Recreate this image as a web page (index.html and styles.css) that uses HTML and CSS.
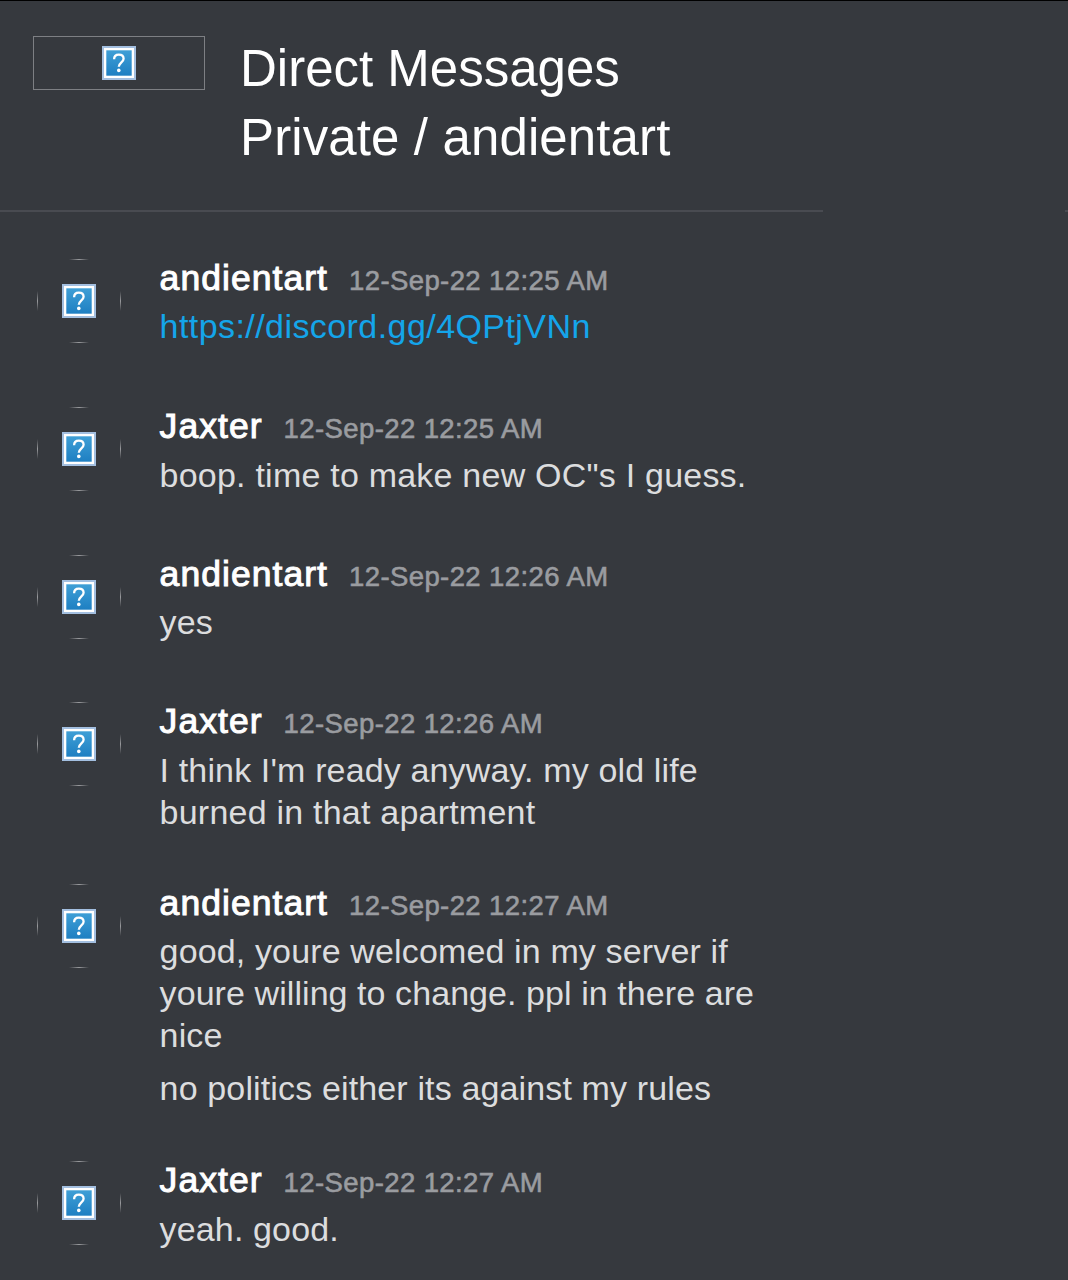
FILE: index.html
```
<!DOCTYPE html>
<html lang="en">
<head>
<meta charset="utf-8">
<title>Direct Messages</title>
<link rel="stylesheet" href="styles.css">
</head>
<body>
<svg class="defs" aria-hidden="true">
  <defs>
    <linearGradient id="blue" x1="0" y1="0" x2="0" y2="1">
      <stop offset="0" stop-color="#3f9fd6"/><stop offset="1" stop-color="#1e7fc2"/>
    </linearGradient>
    <symbol id="missing" viewBox="0 0 34 34">
      <rect width="34" height="34" fill="#a3bfe0"/>
      <rect x="2" y="2" width="30" height="30" fill="#fff"/>
      <rect x="4.3" y="4.3" width="25.4" height="25.4" fill="url(#blue)"/>
      <path d="M12.1 13.3C12.1 10.2 13.9 8.6 16.8 8.6C19.8 8.6 21.6 10.2 21.6 12.7C21.6 16.1 16.8 16.6 16.8 20.8" fill="none" stroke="#fff" stroke-width="2.3"/>
      <circle cx="16.8" cy="24.4" r="1.8" fill="#fff"/>
    </symbol>
  </defs>
</svg>
<header class="header">
  <div class="guild-icon"><svg class="missing"><use href="#missing"/></svg></div>
  <div class="titles"><div class="title">Direct Messages</div><div class="title channel">Private / andientart</div></div>
</header>
<div class="divider"><span class="rule"></span><span class="stub"></span></div>
<main class="chat">
  <section class="message snug">
    <div class="avatar"><svg class="missing"><use href="#missing"/></svg></div>
    <div class="content"><div class="meta"><span class="name">andientart</span><span class="time">12-Sep-22 12:25 AM</span></div>
      <div class="text"><a class="link">https://discord.gg/4QPtjVNn</a></div></div>
  </section>
  <section class="message">
    <div class="avatar"><svg class="missing"><use href="#missing"/></svg></div>
    <div class="content"><div class="meta"><span class="name">Jaxter</span><span class="time">12-Sep-22 12:25 AM</span></div>
      <div class="text wide">boop. time to make new OC"s I guess.</div></div>
  </section>
  <section class="message">
    <div class="avatar"><svg class="missing"><use href="#missing"/></svg></div>
    <div class="content"><div class="meta"><span class="name">andientart</span><span class="time">12-Sep-22 12:26 AM</span></div>
      <div class="text">yes</div></div>
  </section>
  <section class="message">
    <div class="avatar"><svg class="missing"><use href="#missing"/></svg></div>
    <div class="content"><div class="meta"><span class="name">Jaxter</span><span class="time">12-Sep-22 12:26 AM</span></div>
      <div class="text">I think I'm ready anyway. my old life<br><span class="wide">burned in that apartment</span></div></div>
  </section>
  <section class="message snug">
    <div class="avatar"><svg class="missing"><use href="#missing"/></svg></div>
    <div class="content"><div class="meta"><span class="name">andientart</span><span class="time">12-Sep-22 12:27 AM</span></div>
      <div class="text">good, youre welcomed in my server if<br><span class="tight">youre willing to change. ppl in there are</span><br>nice</div>
      <div class="text">no politics either its against my rules</div></div>
  </section>
  <section class="message">
    <div class="avatar"><svg class="missing"><use href="#missing"/></svg></div>
    <div class="content"><div class="meta"><span class="name">Jaxter</span><span class="time">12-Sep-22 12:27 AM</span></div>
      <div class="text">yeah. good.</div></div>
  </section>
</main>
</body>
</html>
```
FILE: styles.css
```
* { box-sizing: border-box; }
body {
  margin: 0;
  height: 1280px;
  overflow: hidden;
  border-top: 1px solid #000;
  background: #36393e;
  color: #dcddde;
  font-family: "Liberation Sans", Arial, sans-serif;
}
.defs { display: block; width: 0; height: 0; }
.missing { display: block; width: 34px; height: 34px; }
.header { display: flex; align-items: flex-start; height: 209px; padding: 35px 0 0 33px; }
.guild-icon {
  display: flex; justify-content: center; align-items: center;
  width: 172px; height: 54px;
  border: 1px solid #7d7f83;
}
.titles { margin: -2px 0 0 35px; }
.title { font-size: 51px; line-height: 69px; color: #fff; white-space: nowrap; }
.channel { letter-spacing: 0.12px; }
.divider { display: flex; justify-content: space-between; height: 2px; }
.rule { width: 823px; background: #494b51; }
.stub { width: 3px; background: #494b51; }
.chat { padding: 47.4px 0 0 36.6px; }
.message { display: flex; min-height: 96.3px; margin-bottom: 51.3px; }
.avatar {
  display: flex; justify-content: center; align-items: center;
  flex: none; width: 84px; height: 84px;
  background:
    linear-gradient(90deg, transparent, #9a9b9e, transparent) center top / 20px 1px no-repeat,
    linear-gradient(90deg, transparent, #9a9b9e, transparent) center bottom / 20px 1px no-repeat,
    linear-gradient(transparent, #9a9b9e, transparent) left center / 1px 20px no-repeat,
    linear-gradient(transparent, #9a9b9e, transparent) right center / 1px 20px no-repeat;
}
.content { margin-left: 39px; white-space: nowrap; }
.meta { display: flex; align-items: baseline; height: 46.8px; line-height: 38px; }
.snug .meta { height: 45.8px; }
.name { font-size: 35.5px; letter-spacing: 1.05px; color: #fff; -webkit-text-stroke: 1px #fff; }
.time { margin-left: 21px; font-size: 27.5px; letter-spacing: 0.4px; color: #9a9ca0; -webkit-text-stroke: 0.6px #9a9ca0; }
.text { font-size: 34px; letter-spacing: 0.14px; line-height: 42.1px; }
.text + .text { margin-top: 10.8px; }
.wide { letter-spacing: 0.22px; }
.tight { letter-spacing: 0.07px; }
.link { color: #14a5ea; letter-spacing: 0.43px; }
```
